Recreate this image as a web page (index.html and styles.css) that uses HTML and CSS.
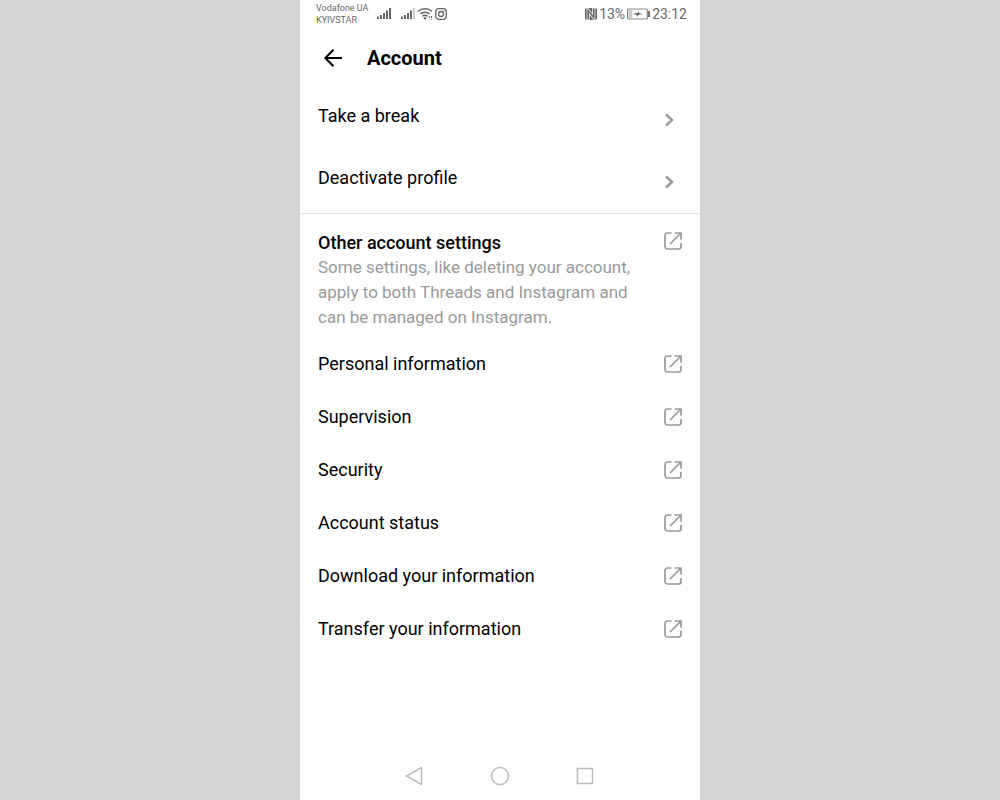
FILE: index.html
```html
<!DOCTYPE html>
<html lang="en">
<head>
  <meta charset="UTF-8" />
  <meta name="viewport" content="width=device-width, initial-scale=1.0" />
  <title>Account</title>
  <link rel="stylesheet" href="styles.css">
</head>
<body>
  <!-- Shared icons -->
  <svg class="sprite" aria-hidden="true">
    <symbol id="chevron" viewBox="0 0 10 16">
      <path d="M2 2.5 8 8l-6 5.5" fill="none" stroke="currentColor" stroke-width="2.5" />
    </symbol>
    <symbol id="external" viewBox="0 0 18 18">
      <path d="M7.5 1h-4A2.5 2.5 0 0 0 1 3.5v11A2.5 2.5 0 0 0 3.5 17h11a2.5 2.5 0 0 0 2.5-2.5V11M6 12 16.5 1.5M10.5 1H17v6.5" fill="none" stroke="currentColor" stroke-width="1.7" />
    </symbol>
    <symbol id="signal" viewBox="0 0 14 13">
      <path d="M1 9.5V12M4 8v4M7 6v6M10 3.5V12M13 1v11" fill="none" stroke="currentColor" stroke-width="2" />
    </symbol>
    <symbol id="signal-weak" viewBox="0 0 14 13">
      <path d="M1 9.5V12M4 8v4M7 6v6M10 3.5V12" fill="none" stroke="currentColor" stroke-width="2" />
      <path d="M13 1v11" stroke="#ccc" stroke-width="2" />
    </symbol>
  </svg>

  <div class="phone">
    <div class="status">
      <div class="carrier">Vodafone UA<br>KYIVSTAR</div>
      <div class="signals">
        <svg class="bars" width="14" height="13"><use href="#signal" /></svg>
        <svg width="14" height="13"><use href="#signal-weak" /></svg>
        <svg width="16" height="13" viewBox="0 0 16 13" fill="none" stroke="currentColor" stroke-width="1.5">
          <path d="M1 4.5a10.5 10.5 0 0 1 14 0M3.3 7a7 7 0 0 1 9.400 0M5.5 9.4a3.8 3.8 0 0 1 5 0" />
          <circle cx="8" cy="11.3" r="1.3" fill="currentColor" stroke="none" />
          <path d="M12.2 9v3.5M14.5 9v3.5" stroke-width="1" stroke-dasharray="2 1" />
        </svg>
        <svg width="12" height="12" viewBox="0 0 12 12" fill="none" stroke="currentColor" stroke-width="1.3">
          <rect x=".7" y=".7" width="10.6" height="10.6" rx="3" />
          <circle cx="6" cy="6" r="2.5" />
          <circle cx="9" cy="3" r=".7" fill="currentColor" stroke="none" />
        </svg>
      </div>
      <div class="power">
        <svg width="12" height="12" viewBox="0 0 12 12">
          <rect width="12" height="12" rx="2" fill="currentColor" />
          <path d="M3.2 12V2.5l5.6 7V0" fill="none" stroke="#fff" stroke-width="3" />
          <path d="M3.2 11.5v-9l5.6 7v-9" fill="none" stroke="currentColor" stroke-width="1.6" />
        </svg>
        <span>13%</span>
        <svg width="23" height="12" viewBox="0 0 23 12">
          <rect x=".6" y="1" width="19.8" height="10" rx="1" fill="none" stroke="#888" stroke-width="1.2" />
          <path d="M1.5 2h4v8h-4z" fill="#ccc" />
          <path d="m6 6 3.5-1 1 .3.5-2.3 1.5 2.5L16 6l-3.5.8-1.5.2-.5 2-1-2z" fill="currentColor" />
          <path d="M22 3v6" stroke="currentColor" stroke-width="1.8" />
        </svg>
        <span>23:12</span>
      </div>
    </div>

    <header>
      <button aria-label="Back">
        <svg width="20" height="20" viewBox="0 0 20 20" fill="none" stroke="currentColor" stroke-width="2">
          <path d="M19 10H2.5M10.5 1.8 2.3 10l8.2 8.2" />
        </svg>
      </button>
      <h1>Account</h1>
    </header>

    <main>
      <nav class="profile">
        <a href="#break"><span>Take a break</span><svg width="10" height="16"><use href="#chevron" /></svg></a>
        <a href="#deactivate"><span>Deactivate profile</span><svg width="10" height="16"><use href="#chevron" /></svg></a>
      </nav>

      <section class="other">
        <div>
          <h2>Other account settings</h2>
          <p>Some settings, like deleting your account, apply to both Threads and Instagram and can be managed on Instagram.</p>
        </div>
        <a href="#other" aria-label="Open other account settings"><svg width="18" height="18"><use href="#external" /></svg></a>
      </section>

      <nav class="links">
        <a href="#personal">Personal information<svg width="18" height="18"><use href="#external" /></svg></a>
        <a href="#supervision">Supervision<svg width="18" height="18"><use href="#external" /></svg></a>
        <a href="#security">Security<svg width="18" height="18"><use href="#external" /></svg></a>
        <a href="#status">Account status<svg width="18" height="18"><use href="#external" /></svg></a>
        <a href="#download">Download your information<svg width="18" height="18"><use href="#external" /></svg></a>
        <a href="#transfer">Transfer your information<svg width="18" height="18"><use href="#external" /></svg></a>
      </nav>
    </main>

    <!-- Android navigation -->
    <footer>
      <button aria-label="Back">
        <svg width="20" height="20" viewBox="0 0 20 20"><path d="M16.5 1.5v17L1.5 10z" /></svg>
      </button>
      <button aria-label="Home">
        <svg width="20" height="20" viewBox="0 0 20 20"><circle cx="10" cy="10" r="8.5" /></svg>
      </button>
      <button aria-label="Recent apps">
        <svg width="20" height="20" viewBox="0 0 20 20"><rect x="2.5" y="2.5" width="15" height="15" /></svg>
      </button>
    </footer>
  </div>
</body>
</html>
```
FILE: styles.css
```css
* {
  box-sizing: border-box;
}
body {
  margin: 0;
  background: #d5d5d5;
  color: #000;
  font-family: Roboto, sans-serif;
  font-size: 18px;
}
h1, h2, p {
  margin: 0;
}
a {
  color: inherit;
  text-decoration: none;
}
button {
  display: flex;
  padding: 0;
  border: none;
  background: none;
  color: inherit;
  cursor: pointer;
}
svg {
  display: block;
  flex-shrink: 0;
}
.sprite {
  position: absolute;
  width: 0;
  height: 0;
}
.phone {
  display: flex;
  flex-direction: column;
  max-width: 400px;
  min-height: 100vh;
  margin: 0 auto;
  background: #fff;
}
.status {
  display: flex;
  align-items: center;
  height: 27px;
  padding: 0 13px 0 16px;
  color: #666;
}
.carrier {
  font-size: 9px;
  line-height: 12px;
}
.signals {
  display: flex;
  align-items: center;
  gap: 2px;
  margin-left: 9px;
}
.bars {
  margin-right: 8px;
}
.power {
  display: flex;
  align-items: center;
  gap: 2px;
  margin-left: auto;
  font-size: 14px;
}
header {
  display: flex;
  align-items: center;
  gap: 24px;
  height: 62px;
  padding: 0 23px;
}
h1 {
  font-size: 20px;
  font-weight: 700;
}
.profile {
  border-bottom: 1px solid #e5e5e5;
}
.profile a, .links a {
  display: flex;
  align-items: center;
  justify-content: space-between;
}
.profile a {
  height: 62px;
  padding: 0 26px 0 18px;
}
.profile span {
  padding-bottom: 9px;
}
.profile svg, .links svg, .other svg {
  color: #999;
}
.other {
  display: flex;
  justify-content: space-between;
  padding: 16px 18px 7px;
  line-height: 25px;
}
.other div {
  max-width: 320px;
}
.other a {
  padding-top: 2px;
}
h2 {
  font-size: 18px;
  font-weight: 500;
}
.other p {
  color: #999;
  font-size: 17px;
}
.links a {
  height: 53px;
  padding: 0 18px;
}
footer {
  display: flex;
  justify-content: center;
  gap: 65px;
  margin-top: auto;
  padding: 14px 0;
}
footer svg {
  fill: none;
  stroke: #bbb;
  stroke-width: 1.5;
}
```
